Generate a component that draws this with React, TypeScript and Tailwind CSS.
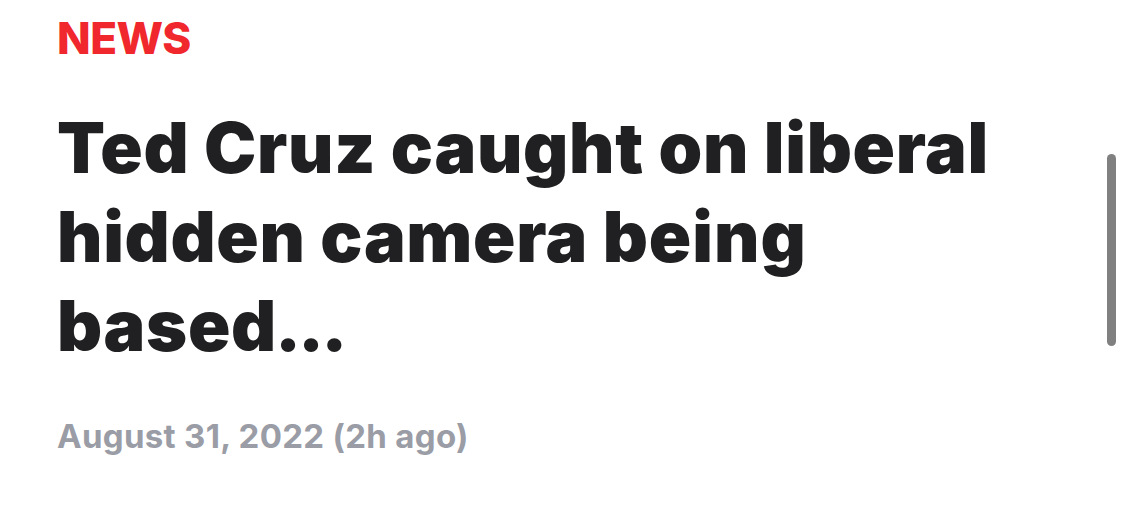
import React from 'react'

const App = () => {
    return (
        <div className="relative h-[523px] w-[1125px] overflow-hidden bg-white" style={{ fontFamily: 'Inter, "Noto Sans", sans-serif' }}>
            <div className="pl-[57px] pt-[14px]">
                <div className="text-[44px] font-extrabold leading-[48px] tracking-[-0.5px] text-[#f0282d]">NEWS</div>
                {/* headline, 3 lines like the app */}
                <h1 className="mt-[41px] text-[70px] font-black leading-[89px] tracking-[0.7px] text-[#202022]">
                    Ted Cruz caught on liberal
                    <br />
                    hidden camera <span className="tracking-[1px]">being</span>
                    <br />
                    based<span className="ml-[-2px] tracking-[-3px]">...</span>
                </h1>
                <div className="mt-[46px] text-[33px] font-bold leading-[40px] tracking-[0.3px] text-[#9a9ca6]">August 31, 2022 (2h ago)</div>
            </div>
            <div className="absolute left-[1107px] top-[154px] h-[192px] w-[9px] rounded-full bg-[#808080]" />
        </div>
    )
}

export default App
